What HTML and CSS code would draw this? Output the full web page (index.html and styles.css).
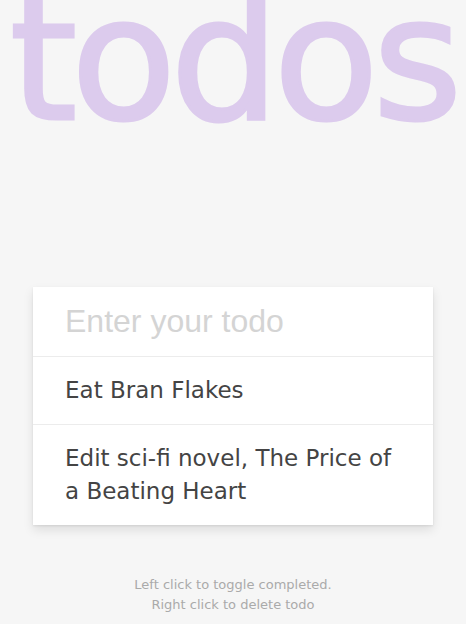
FILE: index.html
```html
<!DOCTYPE html>
<html lang="en">
<head>
<meta charset="utf-8">
<title>todos</title>
<link rel="stylesheet" href="styles.css">
</head>
<body>
<main class="app">
  <h1 class="title">todos</h1>
  <section class="card">
    <input class="entry" type="text" placeholder="Enter your todo">
    <ul class="list">
      <li class="item">Eat Bran Flakes</li>
      <li class="item">Edit sci-fi novel, The Price of a Beating Heart</li>
    </ul>
  </section>
  <p class="hint">Left click to toggle completed.<br>Right click to delete todo</p>
</main>
</body>
</html>
```
FILE: styles.css
```css
html, body {
  margin: 0;
  padding: 0;
  background: #f6f6f6;
}
.app {
  display: flex;
  flex-direction: column;
  align-items: center;
  font-family: "DejaVu Sans", "Noto Sans", sans-serif;
}
.title {
  margin: -40px 0 0 0;
  font-family: "DejaVu Sans", sans-serif;
  font-weight: normal;
  font-size: 172px;
  line-height: 200px;
  letter-spacing: -6px;
  color: #dccbed;
  -webkit-text-stroke: 3px #dccbed;
  white-space: nowrap;
}
.card {
  margin-top: 127px;
  width: 400px;
  background: #fff;
  box-shadow: 0 1px 2px rgba(0,0,0,0.08), 0 5px 10px rgba(0,0,0,0.1);
}
.entry {
  display: block;
  box-sizing: border-box;
  width: 100%;
  height: 69px;
  border: 0;
  outline: none;
  padding: 0 32px;
  font-family: "Liberation Sans", Arial, sans-serif;
  font-size: 32px;
  color: #444;
  background: transparent;
}
.entry::placeholder {
  color: #d4d4d4;
}
.list {
  list-style: none;
  margin: 0;
  padding: 0;
}
.item {
  border-top: 1px solid #ececec;
  padding: 17px 32px;
  font-size: 23px;
  line-height: 33px;
  color: #444;
}
.hint {
  margin: 50px 0 0 0;
  text-align: center;
  font-size: 13px;
  line-height: 20px;
  color: #aaa;
}
```
